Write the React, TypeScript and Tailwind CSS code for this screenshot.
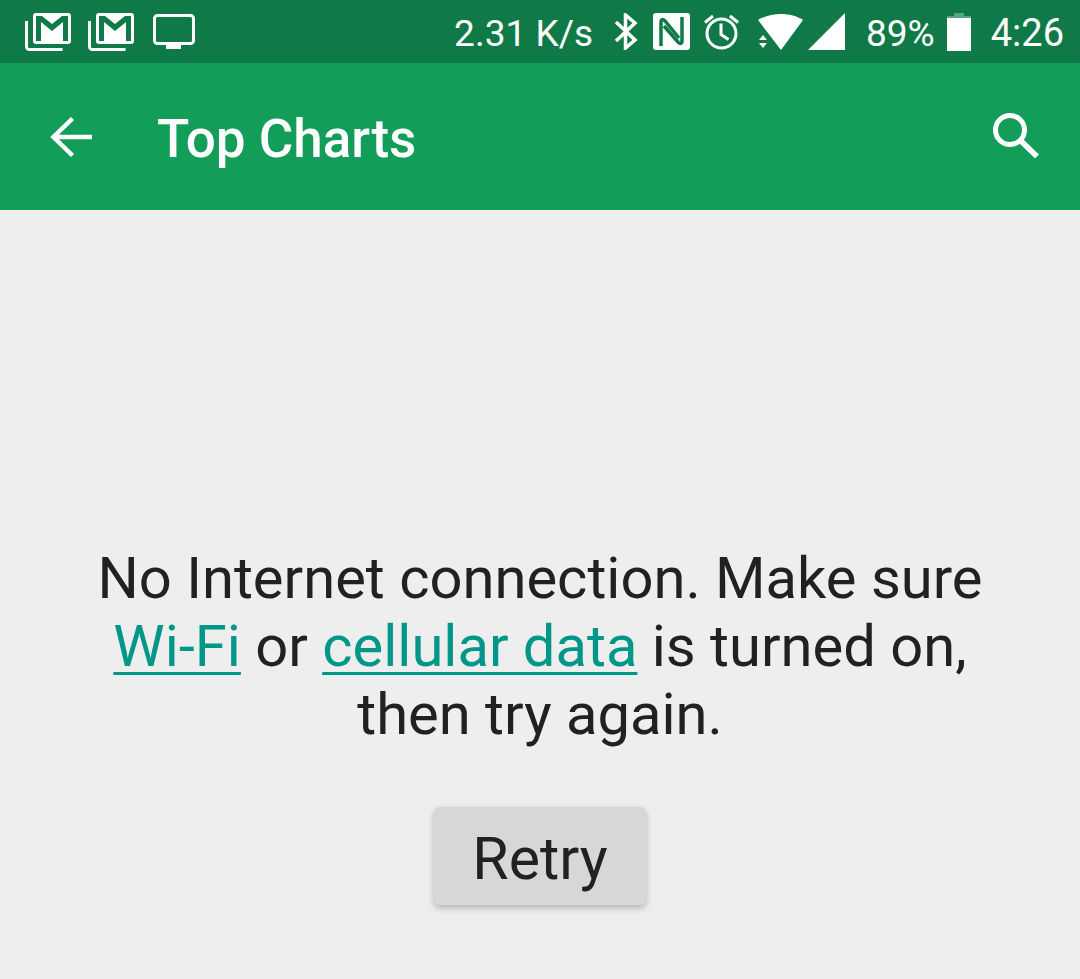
const FONT = "font-['Roboto',sans-serif]";

function MailStack() {
  return (
    <svg width="46" height="38" viewBox="0 0 46 38">
      <path d="M1.500 8v25.500a3 3 0 0 0 3 3h33" fill="none" stroke="#fff" strokeWidth="3" />
      <rect x="8" y="0" width="38" height="31" rx="3" fill="#fff" />
      <path d="M11 28V3h6l10 8 10-8h6v25h-5V9l-11 9-11-9v19z" fill="#0f7a48" />
    </svg>
  );
}

function Monitor() {
  return (
    <svg width="42" height="35" viewBox="0 0 42 35">
      <rect x="1.500" y="1.500" width="39" height="28" rx="3" fill="none" stroke="#fff" strokeWidth="3" />
      <rect x="13" y="30" width="15" height="5" fill="#fff" />
    </svg>
  );
}

function Bluetooth() {
  return (
    <svg width="24" height="37" viewBox="0 0 24 37">
      <path d="M2 9l19 18-9.500 8V2L21 10 2 28" fill="none" stroke="#fff" strokeWidth="3.500" />
    </svg>
  );
}

function Nfc() {
  return (
    <svg width="37" height="37" viewBox="0 0 37 37">
      <rect width="37" height="37" rx="3" fill="#fff" />
      <path d="M8 33V9c0-3 2-3 4-1l14 17" fill="none" stroke="#0f7a48" strokeWidth="3.500" />
      <path d="M29 4v24c0 3-2 3-4 1L11 13" fill="none" stroke="#0f7a48" strokeWidth="3.500" />
    </svg>
  );
}

function Alarm() {
  return (
    <svg width="37" height="37" viewBox="0 0 37 37">
      <circle cx="18.500" cy="20.500" r="14.500" fill="none" stroke="#fff" strokeWidth="3" />
      <path d="M18 10.500v11l7.500 5M2 9.500l8-6.500M35 9.500l-8-6.500" fill="none" stroke="#fff" strokeWidth="3" />
    </svg>
  );
}

function Wifi() {
  return (
    <svg width="46" height="37" viewBox="0 0 46 37">
      <path d="M0 6C13-2 33-2 45 6L23 36z" transform="translate(0 1)" fill="#fff" />
      <path d="M1 27l4-5 4 5zM1 30h8l-4 5z" fill="#fff" />
    </svg>
  );
}

function Signal() {
  return (
    <svg width="37" height="37" viewBox="0 0 37 37">
      <path d="M0 37L37 0v37z" fill="#fff" />
    </svg>
  );
}

function Battery() {
  return (
    <svg width="24" height="38" viewBox="0 0 24 38">
      <path d="M7 0h10v3h7v5H0V3h7z" fill="#fff" fillOpacity="0.3" />
      <rect y="5" width="24" height="33" fill="#fff" />
    </svg>
  );
}

function BackArrow() {
  return (
    <svg width="42" height="42" viewBox="0 0 42 42" className="shrink-0">
      <path d="M4 21h38M22.500 2.500L3.500 21l19 18.500" fill="none" stroke="#fff" strokeWidth="4.500" />
    </svg>
  );
}

function SearchGlass() {
  return (
    <svg width="48" height="46" viewBox="0 0 48 46" className="mb-[4px] shrink-0">
      <circle cx="18" cy="18" r="14.500" fill="none" stroke="#fff" strokeWidth="5" />
      <path d="M28 28l17 16.500" fill="none" stroke="#fff" strokeWidth="5.500" />
    </svg>
  );
}

export default function App() {
  return (
    <div className={`flex h-[979px] w-[1080px] flex-col overflow-hidden bg-[#eeeeee] ${FONT}`}>
      <div className="flex h-[63px] shrink-0 items-center justify-between bg-[#0f7a48] pl-[25px] pr-[16px] text-[37px] text-white">
        <div className="flex items-center gap-[17px]">
          <MailStack />
          <MailStack />
          <div className="ml-[2px]"><Monitor /></div>
        </div>
        <div className="flex items-center">
          <span className="mr-[21px] pt-[4px]">2.31 K/s</span>
          <Bluetooth />
          <div className="ml-[15px]"><Nfc /></div>
          <div className="ml-[13px]"><Alarm /></div>
          <div className="ml-[18px]"><Wifi /></div>
          <div className="ml-[4px]"><Signal /></div>
          <span className="ml-[21px] pt-[4px]">89%</span>
          <div className="ml-[12px]"><Battery /></div>
          <span className="ml-[20px] pt-[4px] text-[38px]">4:26</span>
        </div>
      </div>
      <div className="flex h-[147px] shrink-0 items-center bg-[#129e58] pl-[50px] pr-[40px] text-white">
        <BackArrow />
        <h1 className="ml-[65px] flex-1 pt-[6px] text-[53px] font-medium leading-none">Top Charts</h1>
        <SearchGlass />
      </div>
      <main className="flex flex-1 flex-col items-center pt-[334px]">
        <p className="w-[1000px] text-center text-[57.9px] leading-[68px] text-[#212121]">
          No Internet connection. Make sure
          <br />
          <a className="text-[#009688] underline decoration-[3px] underline-offset-[6px]">Wi-Fi</a> or{' '}
          <a className="text-[#009688] underline decoration-[3px] underline-offset-[6px]">cellular data</a> is turned on,
          <br />
          then try again.
        </p>
        <button className="mt-[59px] flex h-[98px] w-[212px] items-center justify-center rounded-[6px] bg-[#d6d7d7] pt-[6px] text-[59px] text-[#212121] shadow-[0_3px_6px_rgba(0,0,0,0.25)]">
          Retry
        </button>
      </main>
    </div>
  );
}
